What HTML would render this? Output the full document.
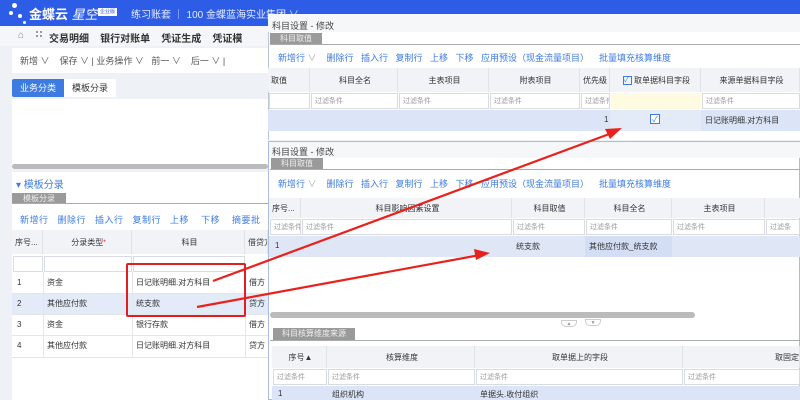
<!DOCTYPE html>
<html><head><meta charset="utf-8"><style>
*{margin:0;padding:0;box-sizing:border-box}
body{width:800px;height:400px;overflow:hidden;position:relative;background:#eef1f6;font-family:"Liberation Sans","Noto Sans CJK SC",sans-serif;font-size:10px;color:#333}
.a{position:absolute;white-space:nowrap}
.b{color:#3e7be0}
.tab{position:absolute;background:#9a9a9a;color:#eee;font-size:8px;text-align:center;line-height:11px;white-space:nowrap}
.cell{position:absolute;border-right:1px solid #e0e3e8;font-size:8px;display:flex;align-items:center;padding-left:3px;white-space:nowrap;overflow:hidden}
.f{position:absolute;background:#fff;border:1px solid #d8dce2;font-size:7px;color:#999;padding-left:3px;display:flex;align-items:center;white-space:nowrap;overflow:hidden}
</style></head><body>
<div class="a" style="left:0;top:0;width:800px;height:26px;background:#2d5de6"></div>
<div class="a" style="left:12px;top:3px;width:5px;height:5px;border-radius:50%;background:#fff"></div>
<div class="a" style="left:9px;top:11px;width:4px;height:4px;border-radius:50%;background:#fff"></div>
<div class="a" style="left:18px;top:14px;width:4px;height:4px;border-radius:50%;background:#fff"></div>
<div class="a" style="left:23px;top:21px;width:3px;height:3px;border-radius:50%;background:#fff"></div>
<div class="a" style="left:29px;top:4px;color:#fff;font-size:13px;font-weight:bold">金蝶云<i style="font-weight:normal"> 星空</i></div>
<div class="a" style="left:98px;top:8px;width:19px;height:8px;background:#fff;color:#2d5de6;font-size:5px;text-align:center">企业版</div>
<div class="a" style="left:131px;top:6px;color:#e6ecff;font-size:10px">练习账套 ｜ 100 金蝶蓝海实业集团 ∨</div>
<div class="a" style="left:0;top:26px;width:268px;height:20px;background:#f4f6f9"></div>
<div class="a" style="left:18px;top:30px;color:#888;font-size:10px">⌂</div>
<div class="a" style="left:36px;top:31px;width:6px;height:6px;border:2px dotted #999"></div>
<div class="a" style="left:49px;top:30px;font-size:10px;font-weight:bold;color:#333">交易明细 &nbsp;&nbsp;&nbsp;银行对账单 &nbsp;&nbsp;&nbsp;凭证生成 &nbsp;&nbsp;&nbsp;凭证模</div>
<div class="a" style="left:12px;top:48px;width:256px;height:25px;background:#fff"></div>
<div class="a" style="left:20px;top:54px;color:#555;font-size:9px">新增 ∨ &nbsp;&nbsp;&nbsp;保存 ∨ | 业务操作 ∨ &nbsp;&nbsp;前一 ∨ &nbsp;&nbsp;&nbsp;后一 ∨ |</div>
<div class="a" style="left:12px;top:79px;width:52px;height:18px;background:#3e7be0;color:#fff;font-size:9px;line-height:18px;text-align:center;border-radius:2px 0 0 2px">业务分类</div>
<div class="a" style="left:64px;top:79px;width:52px;height:18px;background:#fff;font-size:9px;line-height:18px;text-align:center">模板分录</div>
<div class="a" style="left:12px;top:99px;width:256px;height:70px;background:#fff"></div>
<div class="a" style="left:12px;top:164px;width:256px;height:5px;background:#bbb;border-radius:3px"></div>
<div class="a" style="left:12px;top:172px;width:256px;height:228px;background:#fff"></div>
<div class="a" style="left:16px;top:176px;color:#3e7be0;font-size:10px">▾ 模板分录</div>
<div class="tab" style="left:12px;top:193px;width:54px">模板分录</div>
<div class="a" style="left:12px;top:203px;width:256px;height:1px;background:#aaa"></div>
<div class="a b" style="left:20px;top:213px;font-size:9px;letter-spacing:.5px">新增行 &nbsp;&nbsp;删除行 &nbsp;&nbsp;插入行 &nbsp;&nbsp;复制行 &nbsp;&nbsp;上移 &nbsp;&nbsp;&nbsp;下移 &nbsp;&nbsp;&nbsp;摘要批</div>
<div class="a" style="left:12px;top:230px;width:256px;height:24px;background:#f1f3f7"></div>
<div class="cell" style="left:12px;top:230px;width:31px;height:24px">序号...</div>
<div class="cell" style="left:43px;top:230px;width:89px;height:24px;justify-content:center">分录类型<sup style="color:red">*</sup></div>
<div class="cell" style="left:132px;top:230px;width:113px;height:24px;justify-content:center">科目</div>
<div class="cell" style="left:245px;top:230px;width:23px;height:24px">借贷方</div>
<div class="f" style="left:13px;top:256px;width:30px;height:16px"></div>
<div class="f" style="left:44px;top:256px;width:88px;height:16px"></div>
<div class="f" style="left:133px;top:256px;width:112px;height:16px"></div>
<div class="a" style="left:12px;top:294px;width:256px;height:21px;background:#e3eaf8"></div>
<div class="a" style="left:12px;top:293px;width:256px;height:1px;background:#e4e6ea"></div>
<div class="a" style="left:12px;top:314px;width:256px;height:1px;background:#e4e6ea"></div>
<div class="a" style="left:12px;top:335px;width:256px;height:1px;background:#e4e6ea"></div>
<div class="a" style="left:12px;top:357px;width:256px;height:1px;background:#e4e6ea"></div>
<div class="a" style="left:43px;top:272px;width:1px;height:85px;background:#e4e6ea"></div>
<div class="a" style="left:132px;top:272px;width:1px;height:85px;background:#e4e6ea"></div>
<div class="a" style="left:245px;top:272px;width:1px;height:85px;background:#e4e6ea"></div>
<div class="a" style="left:17px;top:272px;font-size:8px;line-height:21px">1<br>2<br>3<br>4</div>
<div class="a" style="left:47px;top:272px;font-size:8px;line-height:21px">资金<br>其他应付款<br>资金<br>其他应付款</div>
<div class="a" style="left:136px;top:272px;font-size:8px;line-height:21px">日记账明细.对方科目<br>统支款<br>银行存款<br>日记账明细.对方科目</div>
<div class="a" style="left:249px;top:272px;font-size:8px;line-height:21px;width:19px;overflow:hidden">借方<br>贷方<br>借方<br>贷方</div>
<div class="a" style="left:126px;top:263px;width:120px;height:54px;border:2px solid #e02020;border-radius:2px"></div>
<div class="a" style="left:268px;top:14px;width:532px;height:126px;background:#fff;border-left:1px solid #b9c6dd"></div>
<div class="a" style="left:268px;top:14px;width:532px;height:18px;background:#f6f7f9"></div>
<div class="a" style="left:272px;top:19px;font-size:9px;color:#444">科目设置 - 修改</div>
<div class="tab" style="left:270px;top:33px;width:52px">科目取值</div>
<div class="a" style="left:270px;top:44px;width:530px;height:1px;background:#aaa"></div>
<div class="a b" style="left:278px;top:51px;font-size:9px">新增行 <span style="color:#aaa">∨</span> &nbsp;&nbsp;&nbsp;删除行 &nbsp;&nbsp;插入行 &nbsp;&nbsp;复制行 &nbsp;&nbsp;上移 &nbsp;&nbsp;下移 &nbsp;&nbsp;应用预设（现金流量项目） &nbsp;&nbsp;&nbsp;批量填充核算维度</div>
<div class="a" style="left:268px;top:68px;width:532px;height:24px;background:#f1f3f7"></div>
<div class="cell" style="left:268px;top:68px;width:42px;height:24px">取值</div>
<div class="cell" style="left:310px;top:68px;width:88px;height:24px;justify-content:center">科目全名</div>
<div class="cell" style="left:398px;top:68px;width:91px;height:24px;justify-content:center">主表项目</div>
<div class="cell" style="left:489px;top:68px;width:91px;height:24px;justify-content:center">附表项目</div>
<div class="cell" style="left:580px;top:68px;width:30px;height:24px">优先级</div>
<div class="cell" style="left:610px;top:68px;width:91px;height:24px;justify-content:center"><span style="display:inline-block;width:9px;height:9px;border:1px solid #3e7be0;color:#3e7be0;font-size:7px;line-height:8px;margin-right:2px">✓</span>取单据科目字段</div>
<div class="cell" style="left:701px;top:68px;width:99px;height:24px;justify-content:center">来源单据科目字段</div>
<div class="f" style="left:269px;top:93px;width:41px;height:16px"></div>
<div class="f" style="left:311px;top:93px;width:87px;height:16px">过滤条件</div>
<div class="f" style="left:399px;top:93px;width:90px;height:16px">过滤条件</div>
<div class="f" style="left:490px;top:93px;width:90px;height:16px">过滤条件</div>
<div class="f" style="left:581px;top:93px;width:29px;height:16px">过滤条件</div>
<div class="a" style="left:611px;top:93px;width:90px;height:16px;background:#fffbe0"></div>
<div class="f" style="left:702px;top:93px;width:98px;height:16px">过滤条件</div>
<div class="a" style="left:268px;top:110px;width:532px;height:21px;background:#dbe5f7"></div>
<div class="a" style="left:610px;top:110px;width:91px;height:21px;background:#e4ebf8"></div>
<div class="a" style="left:604px;top:115px;font-size:8px">1</div>
<div class="a" style="left:650px;top:114px;width:10px;height:10px;border:1px solid #3e7be0;color:#3e7be0;font-size:8px;line-height:9px;text-align:center;background:#fff">✓</div>
<div class="a" style="left:705px;top:115px;font-size:8px">日记账明细.对方科目</div>
<div class="a" style="left:268px;top:141px;width:532px;height:259px;background:#fff;border:1px solid #a9bde0"></div>
<div class="a" style="left:269px;top:142px;width:531px;height:16px;background:#f6f7f9"></div>
<div class="a" style="left:272px;top:145px;font-size:9px;color:#444">科目设置 - 修改</div>
<div class="tab" style="left:271px;top:158px;width:52px">科目取值</div>
<div class="a" style="left:270px;top:169px;width:530px;height:1px;background:#aaa"></div>
<div class="a b" style="left:278px;top:177px;font-size:9px">新增行 <span style="color:#aaa">∨</span> &nbsp;&nbsp;&nbsp;删除行 &nbsp;&nbsp;插入行 &nbsp;&nbsp;复制行 &nbsp;&nbsp;上移 &nbsp;&nbsp;下移 &nbsp;&nbsp;应用预设（现金流量项目） &nbsp;&nbsp;&nbsp;批量填充核算维度</div>
<div class="a" style="left:269px;top:198px;width:531px;height:20px;background:#f1f3f7"></div>
<div class="cell" style="left:269px;top:198px;width:32px;height:20px">序号...</div>
<div class="cell" style="left:301px;top:198px;width:211px;height:20px;justify-content:center">科目影响因素设置</div>
<div class="cell" style="left:512px;top:198px;width:73px;height:20px;justify-content:center">科目取值</div>
<div class="cell" style="left:585px;top:198px;width:87px;height:20px;justify-content:center">科目全名</div>
<div class="cell" style="left:672px;top:198px;width:93px;height:20px;justify-content:center">主表项目</div>
<div class="f" style="left:270px;top:219px;width:31px;height:16px">过滤条件</div>
<div class="f" style="left:302px;top:219px;width:210px;height:16px">过滤条件</div>
<div class="f" style="left:513px;top:219px;width:72px;height:16px">过滤条件</div>
<div class="f" style="left:586px;top:219px;width:86px;height:16px">过滤条件</div>
<div class="f" style="left:673px;top:219px;width:92px;height:16px">过滤条件</div>
<div class="f" style="left:766px;top:219px;width:34px;height:16px">过滤条</div>
<div class="a" style="left:269px;top:236px;width:531px;height:21px;background:#dfe7f7"></div>
<div class="a" style="left:585px;top:236px;width:87px;height:21px;background:#d3def5"></div>
<div class="a" style="left:275px;top:241px;font-size:8px">1</div>
<div class="a" style="left:516px;top:241px;font-size:8px">统支款</div>
<div class="a" style="left:589px;top:241px;font-size:8px">其他应付款_统支款</div>
<div class="a" style="left:270px;top:312px;width:425px;height:6px;background:#bbb;border-radius:3px"></div>
<div class="a" style="left:561px;top:320px;width:16px;height:7px;border:1px solid #ccc;border-radius:0 0 5px 5px;font-size:5px;color:#999;text-align:center">▲</div>
<div class="a" style="left:585px;top:319px;width:16px;height:7px;border:1px solid #ccc;border-radius:0 0 5px 5px;font-size:5px;color:#999;text-align:center">▼</div>
<div class="tab" style="left:273px;top:328px;width:82px;height:12px">科目核算维度来源</div>
<div class="a" style="left:270px;top:340px;width:530px;height:1px;background:#aaa"></div>
<div class="a" style="left:272px;top:346px;width:528px;height:22px;background:#f1f3f7"></div>
<div class="cell" style="left:272px;top:346px;width:55px;height:22px;justify-content:center">序号▲</div>
<div class="cell" style="left:327px;top:346px;width:148px;height:22px;justify-content:center">核算维度</div>
<div class="cell" style="left:475px;top:346px;width:208px;height:22px;justify-content:center">取单据上的字段</div>
<div class="cell" style="left:683px;top:346px;width:117px;height:22px;justify-content:flex-end">取固定</div>
<div class="f" style="left:273px;top:369px;width:54px;height:16px">过滤条件</div>
<div class="f" style="left:328px;top:369px;width:147px;height:16px">过滤条件</div>
<div class="f" style="left:476px;top:369px;width:207px;height:16px">过滤条件</div>
<div class="f" style="left:684px;top:369px;width:116px;height:16px">过滤条件</div>
<div class="a" style="left:272px;top:386px;width:528px;height:14px;background:#dbe5f7"></div>
<div class="a" style="left:278px;top:389px;font-size:8px">1</div>
<div class="a" style="left:332px;top:389px;font-size:8px">组织机构</div>
<div class="a" style="left:480px;top:389px;font-size:8px">单据头.收付组织</div>
<svg class="a" style="left:0;top:0" width="800" height="400">
<path d="M213,281 L612,133" stroke="#e8211c" stroke-width="2.2" fill="none"/>
<polygon points="622,128 605,129 610,139" fill="#e8211c"/>
<path d="M197,307 L480,255" stroke="#e8211c" stroke-width="2.2" fill="none"/>
<polygon points="490,253 474,249 476,260" fill="#e8211c"/>
</svg>
</body></html>
